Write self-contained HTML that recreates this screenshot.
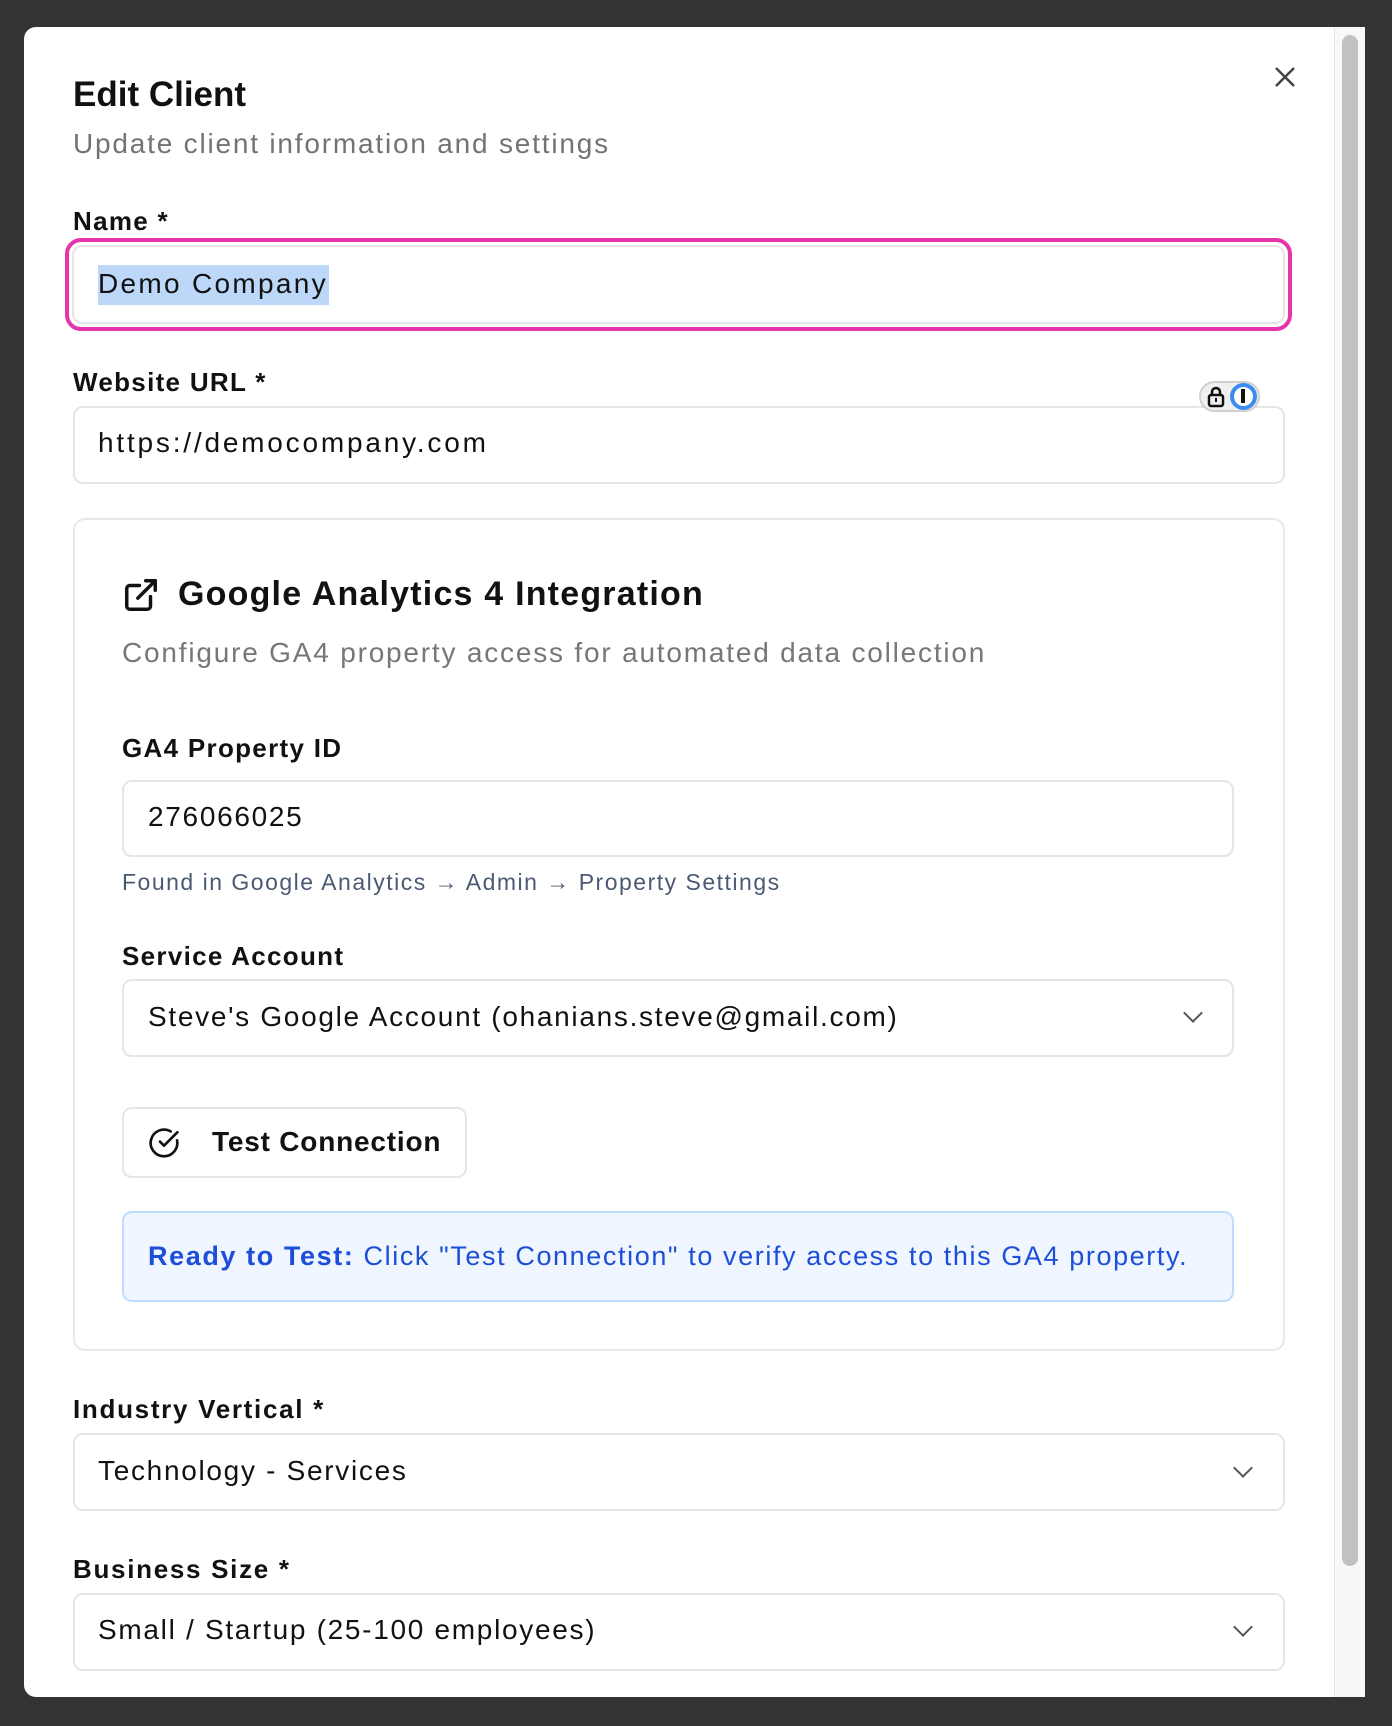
<!DOCTYPE html>
<html><head><style>
*{box-sizing:border-box;margin:0;padding:0}
body{width:1392px;height:1726px;background:#333;font-family:"Liberation Sans",sans-serif;position:relative;overflow:hidden;color:#111}
.a{position:absolute;white-space:nowrap}
.modal{left:24px;top:27px;width:1341px;height:1670px;background:#fff;border-radius:12px;overflow:hidden}
.track{left:1334px;top:27px;width:31px;height:1670px;background:#f8f8f8;border-left:1px solid #e4e4e4}
.thumb{left:1342px;top:35px;width:16px;height:1531px;background:#c1c1c1;border-radius:8px}
.lbl{font-size:26px;font-weight:bold;color:#111;line-height:30px;letter-spacing:1.3px}
.inp{border:2px solid #e5e5e5;border-radius:10px;background:#fff}
.txt{font-size:28px;line-height:32px;color:#111;letter-spacing:1.7px}
.chev{width:14px;height:14px;border-right:2.5px solid #555;border-bottom:2.5px solid #555;transform:rotate(45deg)}
</style></head><body>
<div class="a modal"></div>
<div class="a track"></div><div class="a thumb"></div>

<div class="a" style="left:73px;top:74px;font-size:35px;font-weight:bold;line-height:42px">Edit Client</div>
<div class="a" style="left:73px;top:128px;font-size:28px;color:#737373;line-height:32px;letter-spacing:1.8px">Update client information and settings</div>
<svg class="a" style="left:1274px;top:66px" width="22" height="22" viewBox="0 0 22 22"><path d="M2 2L20 20M20 2L2 20" stroke="#444" stroke-width="2.5"/></svg>

<div class="a lbl" style="left:73px;top:206px">Name *</div>
<div class="a" style="left:65px;top:238px;width:1227px;height:93px;border:4px solid #e535ad;border-radius:16px"></div>
<div class="a inp" style="left:72px;top:245px;width:1213px;height:79px"></div>
<div class="a" style="left:98px;top:265px;width:231px;height:40px;background:#bcd7f7"></div>
<div class="a txt" style="left:98px;top:268px;letter-spacing:2.3px">Demo Company</div>

<div class="a lbl" style="left:73px;top:367px">Website URL *</div>
<div class="a inp" style="left:73px;top:406px;width:1212px;height:78px"></div>
<div class="a txt" style="left:98px;top:427px;letter-spacing:2.8px">https://democompany.com</div>
<div class="a" style="left:1199px;top:381px;width:61px;height:31px;border-radius:16px;background:#f0f0f0;border:2px solid #d0d0d0"></div>
<svg class="a" style="left:1206px;top:386px" width="20" height="22" viewBox="0 0 20 22"><rect x="3" y="9" width="14" height="11" rx="2" fill="none" stroke="#111" stroke-width="2.5"/><path d="M6 9V6a4 4 0 0 1 8 0v3" fill="none" stroke="#111" stroke-width="2.5"/><rect x="9" y="12" width="2" height="4" fill="#111"/></svg>
<div class="a" style="left:1230px;top:383px;width:27px;height:27px;border-radius:50%;border:4px solid #3b8cf0;background:#fff"></div>
<div class="a" style="left:1241px;top:389px;width:4px;height:14px;background:#111"></div>

<div class="a" style="left:73px;top:518px;width:1212px;height:833px;border:2px solid #e8e8e8;border-radius:12px"></div>
<svg class="a" style="left:122px;top:576px" width="38" height="38" viewBox="0 0 24 24" fill="none" stroke="#111" stroke-width="2.2" stroke-linecap="round" stroke-linejoin="round"><path d="M18 13v6a2 2 0 0 1-2 2H5a2 2 0 0 1-2-2V8a2 2 0 0 1 2-2h6"/><path d="M15 3h6v6"/><path d="M10 14L21 3"/></svg>
<div class="a" style="left:178px;top:574px;font-size:34px;font-weight:bold;line-height:40px;letter-spacing:1.2px">Google Analytics 4 Integration</div>
<div class="a" style="left:122px;top:637px;font-size:28px;color:#777;line-height:32px;letter-spacing:1.8px">Configure GA4 property access for automated data collection</div>

<div class="a lbl" style="left:122px;top:733px">GA4 Property ID</div>
<div class="a inp" style="left:122px;top:780px;width:1112px;height:77px"></div>
<div class="a txt" style="left:148px;top:801px">276066025</div>
<div class="a" style="left:122px;top:869px;font-size:23px;color:#4b5a73;line-height:26px;letter-spacing:1.5px">Found in Google Analytics → Admin → Property Settings</div>

<div class="a lbl" style="left:122px;top:941px">Service Account</div>
<div class="a inp" style="left:122px;top:979px;width:1112px;height:78px"></div>
<div class="a txt" style="left:148px;top:1001px">Steve's Google Account (ohanians.steve@gmail.com)</div>
<div class="a chev" style="left:1186px;top:1006px"></div>

<div class="a inp" style="left:122px;top:1107px;width:345px;height:71px"></div>
<svg class="a" style="left:148px;top:1127px" width="32" height="32" viewBox="0 0 24 24" fill="none" stroke="#111" stroke-width="2" stroke-linecap="round" stroke-linejoin="round"><path d="M21.8 10A10 10 0 1 1 17 3.3"/><path d="M9 11l3 3L22 4"/></svg>
<div class="a" style="left:212px;top:1126px;font-size:28px;font-weight:bold;line-height:32px;letter-spacing:0.8px">Test Connection</div>

<div class="a" style="left:122px;top:1211px;width:1112px;height:91px;background:#eff6ff;border:2px solid #bfdbfe;border-radius:10px"></div>
<div class="a" style="left:148px;top:1240px;font-size:27px;color:#1d4ed8;line-height:32px;letter-spacing:1.6px"><b>Ready to Test:</b> Click "Test Connection" to verify access to this GA4 property.</div>

<div class="a lbl" style="left:73px;top:1394px;letter-spacing:1.7px">Industry Vertical *</div>
<div class="a inp" style="left:73px;top:1433px;width:1212px;height:78px"></div>
<div class="a txt" style="left:98px;top:1455px">Technology - Services</div>
<div class="a chev" style="left:1236px;top:1461px"></div>

<div class="a lbl" style="left:73px;top:1554px;letter-spacing:1.7px">Business Size *</div>
<div class="a inp" style="left:73px;top:1593px;width:1212px;height:78px"></div>
<div class="a txt" style="left:98px;top:1614px">Small / Startup (25-100 employees)</div>
<div class="a chev" style="left:1236px;top:1620px"></div>
</body></html>
